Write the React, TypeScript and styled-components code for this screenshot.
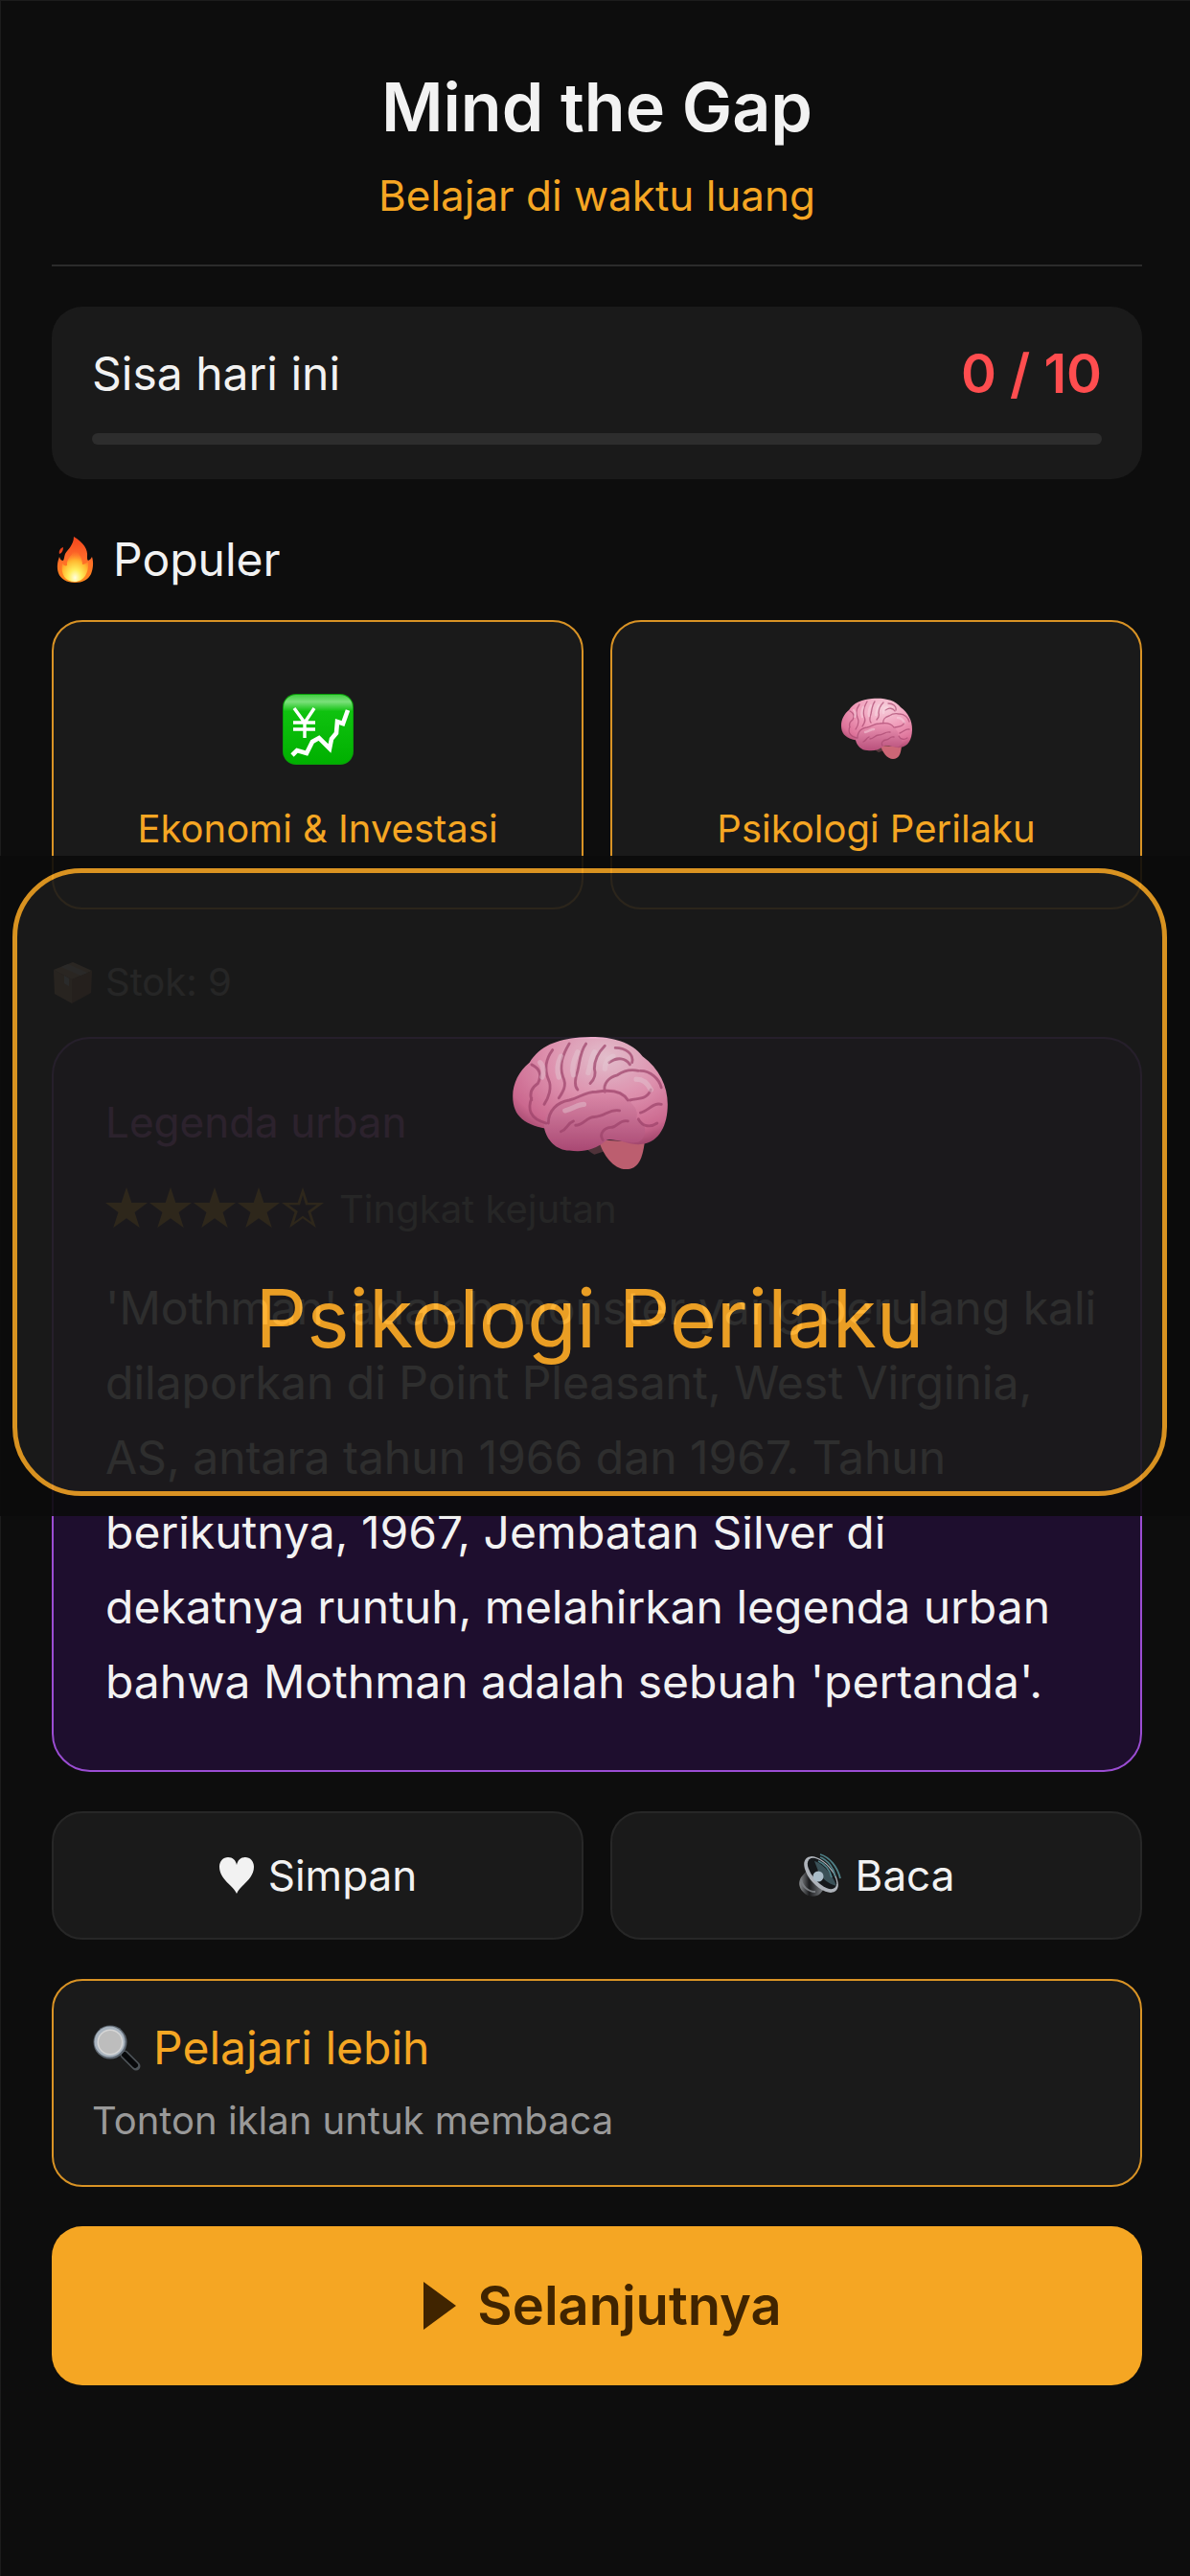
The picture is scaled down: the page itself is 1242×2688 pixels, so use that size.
import React from "react";
import styled, { createGlobalStyle } from "styled-components";

const color = {
  page: "#0d0d0d",
  panel: "#1a1a1a",
  line: "#2b2b2b",
  text: "#f2f2f2",
  muted: "#999999",
  accent: "#f5a623",
  accentLine: "#d99325",
  danger: "#ff4d4f",
  onAccent: "#402400",
};

const GlobalStyle = createGlobalStyle`
  *, *::before, *::after { box-sizing: border-box; }
  body {
    margin: 0;
    background: ${color.page};
    color: ${color.text};
    font-family: Inter, "Liberation Sans", "Noto Sans CJK JP", sans-serif;
  }
  h1, h2, p { margin: 0; font-weight: 400; }
  button { font: inherit; color: inherit; cursor: pointer; margin: 0; }
  svg { display: block; flex: none; }
`;

const Page = styled.div`
  position: relative;
  min-height: 100vh;
  padding: 70px 50px 120px 54px;
  background: ${color.page};
  box-shadow: inset 1px 1px 0 #1c1c1c;
`;

const Header = styled.header`
  display: flex;
  flex-direction: column;
  align-items: center;
  gap: 22px;
  padding-bottom: 44px;
  border-bottom: 2px solid ${color.line};
`;

const Title = styled.h1`
  && { font-weight: 600; }
  font-size: 70px;
  line-height: 84px;
`;

const Tagline = styled.p`
  font-size: 44px;
  line-height: 56px;
  color: ${color.accent};
`;

const QuotaCard = styled.section`
  display: flex;
  flex-direction: column;
  gap: 32px;
  margin-top: 42px;
  padding: 40px 42px 36px;
  border-radius: 32px;
  background: ${color.panel};
`;

const QuotaRow = styled.div`
  display: flex;
  justify-content: space-between;
  align-items: center;
  font-size: 48px;
  line-height: 60px;
`;

const QuotaCount = styled.strong`
  font-size: 56px;
  font-weight: 600;
  color: ${color.danger};
`;

const Track = styled.div`
  height: 12px;
  border-radius: 6px;
  background: #2d2d2d;
  overflow: hidden;
`;

const TrackFill = styled.div`
  height: 100%;
  background: ${color.accent};
`;

const SectionTitle = styled.h2`
  display: flex;
  align-items: center;
  gap: 16px;
  margin: 54px 0 33px;
  font-size: 48px;
  line-height: 60px;
`;

const Columns = styled.div`
  display: grid;
  grid-template-columns: 1fr 1fr;
  gap: 28px;
`;

const TopicCard = styled.button`
  display: flex;
  flex-direction: column;
  align-items: center;
  gap: 40px;
  padding: 72px 24px 58px;
  border: 2px solid ${color.accentLine};
  border-radius: 32px;
  background: ${color.panel};
  && {
    font-size: 40px;
    line-height: 48px;
    color: ${color.accent};
  }
`;

const Stock = styled.p`
  display: flex;
  align-items: center;
  gap: 12px;
  margin: 52px 0 33px;
  font-size: 40px;
  line-height: 48px;
  color: ${color.muted};
`;

const StoryCard = styled.article`
  padding: 59px 40px 53px 54px;
  border: 2px solid #9b4dd3;
  border-radius: 40px;
  background: #1e0e2e;
`;

const StoryTopic = styled.h2`
  font-size: 44px;
  line-height: 56px;
  color: #e070e8;
`;

const Rating = styled.div`
  display: flex;
  align-items: center;
  gap: 14px;
  margin: 39px 0 40px;
  font-size: 40px;
  line-height: 48px;
  color: ${color.muted};
`;

const StoryText = styled.p`
  font-size: 48px;
  line-height: 78px;
  white-space: pre-line;
`;

const Actions = styled(Columns)`
  margin-top: 41px;
`;

const ActionButton = styled.button`
  display: flex;
  align-items: center;
  justify-content: center;
  gap: 14px;
  padding: 37px 24px;
  border: 2px solid #272727;
  border-radius: 32px;
  background: ${color.panel};
  && { font-size: 44px; line-height: 56px; }
`;

const LearnCard = styled.button`
  display: flex;
  flex-direction: column;
  gap: 22px;
  width: 100%;
  padding: 40px 40px 43px;
  border: 2px solid ${color.accentLine};
  border-radius: 32px;
  background: ${color.panel};
  text-align: left;
  && {
    margin-top: 41px;
    font-size: 40px;
    line-height: 48px;
    color: ${color.muted};
  }
`;

const LearnTitle = styled.span`
  display: flex;
  align-items: center;
  gap: 12px;
  font-size: 48px;
  line-height: 60px;
  color: ${color.accent};
`;

const NextButton = styled.button`
  display: flex;
  align-items: center;
  justify-content: center;
  gap: 22px;
  width: 100%;
  padding: 53px 24px;
  border: 0;
  border-radius: 32px;
  background: ${color.accent};
  && {
    margin-top: 41px;
    font-size: 56px;
    font-weight: 600;
    line-height: 60px;
    color: ${color.onAccent};
  }
`;

const Preview = styled.div`
  position: absolute;
  top: 893px;
  left: 0;
  right: 0;
  padding: 13px 24px 21px 13px;
  background: #0b0b0b;
  opacity: 0.91;
`;

const PreviewCard = styled.div`
  display: flex;
  flex-direction: column;
  align-items: center;
  gap: 84px;
  padding: 154px 24px 128px;
  border: 5px solid #eda022;
  border-radius: 72px;
  background: #1b1b1b;
  color: #ffad24;
  font-size: 84px;
  line-height: 104px;
`;

const Fire = () => (
  <svg width="48" height="52" viewBox="0 0 48 52" aria-hidden="true">
    <defs>
      <linearGradient id="fireOuter" x1="0" y1="0" x2="0" y2="1">
        <stop offset="0" stopColor="#f0441c" />
        <stop offset="0.45" stopColor="#ff6a2a" />
        <stop offset="1" stopColor="#ff8a1c" />
      </linearGradient>
      <radialGradient id="fireInner" cx="0.5" cy="0.88" r="0.8">
        <stop offset="0" stopColor="#fffde0" />
        <stop offset="0.3" stopColor="#ffee5c" />
        <stop offset="0.65" stopColor="#ffb52e" />
        <stop offset="1" stopColor="#ff7a2a" stopOpacity="0" />
      </radialGradient>
    </defs>
    <path
      d="M23 2C33 8 38 15 37 23c0 2 0 3 1 4 2-1 3-2 4-4 2 6 1 13-1 18-3 6-9 9-17 9S9 46 7 40C5 34 6 28 8 23c1 3 2 4 4 4 1-2 1-4 2-7 2-4 9-9 9-18Z"
      fill="url(#fireOuter)"
    />
    <path d="M12 13c-3 1-5 4-4 7 3-1 4-4 4-7Z" fill="#e8421c" />
    <path
      d="M24 14c6 7 8 12 8 17 2 0 4-1 6-3 1 11-4 21-14 21S9 41 11 30c2 2 3 3 5 2-1-8 6-10 8-18Z"
      fill="url(#fireInner)"
    />
  </svg>
);

const Chart = () => (
  <svg width="76" height="80" viewBox="0 0 76 80" aria-hidden="true">
    <defs>
      <linearGradient id="chartFace" x1="0" y1="0" x2="0" y2="1">
        <stop offset="0" stopColor="#43cf43" />
        <stop offset="0.1" stopColor="#7be07b" />
        <stop offset="0.24" stopColor="#0fc20f" />
        <stop offset="1" stopColor="#00b000" />
      </linearGradient>
    </defs>
    <rect x="1" y="3" width="74" height="74" rx="14" fill="#0a9e0a" />
    <rect x="2" y="4" width="72" height="72" rx="13" fill="url(#chartFace)" />
    <g fill="none" stroke="#fff">
      <path d="M13 18 24 33 34 18M24 33v16M12 33h23M12 40h23" strokeWidth="3.4" />
      <path d="m11 67 5-5 10 3 6-12 7-4 11 11 2-10 5-6 1-12 6 2 5-14" strokeWidth="4.6" />
    </g>
  </svg>
);

const Brain = ({ size, id }: { size: number; id: string }) => (
  <svg width={size} height={(size * 80) / 76} viewBox="0 0 76 80" aria-hidden="true">
    <defs>
      <radialGradient id={id + "Top"} cx="0.6" cy="0.18" r="0.85">
        <stop offset="0" stopColor="#f6cfdb" />
        <stop offset="0.45" stopColor="#f09dba" />
        <stop offset="0.8" stopColor="#dd7299" />
        <stop offset="1" stopColor="#a34269" />
      </radialGradient>
      <linearGradient id={id + "Low"} x1="0" y1="0" x2="0" y2="1">
        <stop offset="0" stopColor="#f09ab8" />
        <stop offset="1" stopColor="#b84f7b" />
      </linearGradient>
    </defs>
    <path d="M36 56c-2 3 0 6 4 8l9-3Z" fill="#54363b" />
    <path d="M42 57c2 7 7 14 13 14s8-5 9-13Z" fill="#cc6676" />
    <path
      d="M19 52C7 50 1 46 1 36c0-6 3-12 8-16C14 12 22 9 33 8c12-1 24 1 30 9 8 6 12 14 12 23 0 10-4 18-12 19-6 1-11-3-18-2-9 6-23 6-26-5Z"
      fill={`url(#${id}Top)`}
    />
    <path
      d="M16 51c0-6 4-11 11-12 5-3 9-4 14-5 7-3 12-1 15 4 4 3 5 6 4 9 6 2 5 9 1 11-5 1-10-2-15-1-6 5-12 6-18 5-6 0-11-5-12-11Z"
      fill={`url(#${id}Low)`}
    />
    <g fill="none" stroke="#a8476f" strokeWidth="1.3" strokeLinecap="round" opacity="0.7">
      <path d="M18 49c0-6 4-10 10-11 5-1 7-4 13-4 6-1 12-1 15 4M17 49C9 47 8 42 10 37M10 21c4 2 5 5 3 9-3 2-4 5-3 8M20 14c-3 4-4 9-2 14 2 4 0 9-2 12M28 11c-3 5-5 10-3 16 2 4 0 7-2 10M36 11c-3 4-3 9-4 13-1 3-2 7 0 9M45 12c-3 3-5 6-5 11 1 3 0 5-2 7M45 34c-1-4 2-7 6-8 3-2 6-3 10-2M50 13c5 0 9 3 8 7M47 20c4-3 8-2 10 1M62 24c5 0 9 4 10 8M57 38c4-1 8 0 10-5M62 44c4-1 6-5 10-4M61 47c2 4 6 4 9 2M31 50c4 0 5-4 9-4 5 0 7-4 12-3M24 53c3-1 3-4 6-5M44 57c-2-3 1-6 4-6s4-4 8-3" />
    </g>
    <g fill="none" stroke="#f9dbe5" strokeWidth="2.4" strokeLinecap="round" opacity="0.45">
      <path d="M24 17c-2 4-2 7-1 10M32 15c-2 4-3 8-2 11M40 15c-2 4-2 7-3 10M49 17c-3 1-4 4-4 6M14 20c2 2 2 5 1 7M60 28c4 0 6 3 7 5M26 43c4-1 6-3 9-3" />
    </g>
  </svg>
);

const Box = () => (
  <svg width="44" height="48" viewBox="0 0 44 48" aria-hidden="true">
    <path d="m2 11 20-8 20 9-21 9Z" fill="#c99a72" />
    <path d="m2 11 19 10v25L3 36Z" fill="#b5835a" />
    <path d="m42 12-21 9v25l20-11Z" fill="#8b5a35" />
    <path d="m10 8 7-3 20 9-7 3Z" fill="#c9bfae" />
    <path d="m13 17 5 3v8l-5-3Z" fill="#c8d2d8" />
  </svg>
);

const STAR = "M22 0 27.3 16H44L30.5 26 35.7 42 22 32.3 8.3 42 13.5 26 0 16H16.7Z";
const STAR_HOLE = "M22 8 19 18.2H7.5L16.7 25 13 36.2 22 29.8 31 36.2 27.3 25 36.5 18.2H25Z";

const Stars = ({ value, total }: { value: number; total: number }) => (
  <svg
    width={total * 46}
    height="46"
    viewBox={`0 0 ${total * 46} 46`}
    role="img"
    aria-label={`${value} / ${total}`}
  >
    {Array.from({ length: total }, (_, i) => (
      <path
        key={i}
        d={i < value ? STAR : STAR + STAR_HOLE}
        fillRule="evenodd"
        fill={color.accent}
        transform={`translate(${i * 46} 0)`}
      />
    ))}
  </svg>
);

const Heart = () => (
  <svg width="38" height="40" viewBox="0 0 38 40" aria-hidden="true">
    <path
      d="M19 39C16 31 1 24 1 11 1 5 5 1 10 1c5 0 8 3 9 8 1-5 4-8 9-8 5 0 9 4 9 10 0 13-15 20-18 28Z"
      fill={color.text}
    />
  </svg>
);

const Speaker = () => (
  <svg width="46" height="46" viewBox="0 0 46 46" aria-hidden="true">
    <defs>
      <linearGradient id="spkBody" x1="0" y1="0" x2="1" y2="0">
        <stop offset="0" stopColor="#8a8d90" />
        <stop offset="0.4" stopColor="#1c1d1f" />
        <stop offset="1" stopColor="#808488" />
      </linearGradient>
    </defs>
    <path d="M3 25c-3 5-2 11 2 15 5 6 14 6 18 2l4-5L9 18Z" fill="url(#spkBody)" />
    <path d="M3 27c1 7 7 13 15 13" fill="none" stroke="#777b7f" strokeWidth="2" />
    <ellipse cx="24" cy="22" rx="12" ry="23" transform="rotate(-42 24 22)" fill="#aeb3ba" />
    <ellipse cx="25" cy="21" rx="9.5" ry="20" transform="rotate(-42 25 21)" fill="#15181b" />
    <path d="M17 8c8 2 19 14 23 26-8-2-14-7-18-13Z" fill="#3a5158" />
    <circle cx="21" cy="24" r="5.5" fill="#a9bcc8" />
    <g fill="none" stroke="#4f8087" strokeWidth="1.8">
      <path d="M21 8c7 3 12 9 14 17M23 4c8 3 14 11 16 20M23 1c10 3 18 13 21 25" />
    </g>
  </svg>
);

const Magnifier = () => (
  <svg width="52" height="50" viewBox="0 0 52 50" aria-hidden="true">
    <path d="m30 28 5 5" stroke="#8c9094" strokeWidth="5" />
    <path d="m34 32 12 12" stroke="#4d5358" strokeWidth="9" strokeLinecap="round" />
    <path d="m34 32 11 11" stroke="#08090b" strokeWidth="6" strokeLinecap="round" />
    <circle cx="19" cy="19" r="17.5" fill="#5d6670" />
    <circle cx="18.5" cy="18.5" r="16" fill="#a9b4bf" />
    <circle cx="19" cy="19" r="13.5" fill="#d6d6d6" />
    <circle cx="19" cy="19" r="12" fill="#bdbdbd" />
  </svg>
);

const Play = () => (
  <svg width="46" height="50" viewBox="0 0 46 50" aria-hidden="true">
    <path d="M12 0 46 25 12 50Z" fill={color.onAccent} />
  </svg>
);

const quota = { left: 0, total: 10 };

const story = [
  "'Mothman' adalah monster yang berulang kali",
  "dilaporkan di Point Pleasant, West Virginia,",
  "AS, antara tahun 1966 dan 1967. Tahun",
  "berikutnya, 1967, Jembatan Silver di",
  "dekatnya runtuh, melahirkan legenda urban",
  "bahwa Mothman adalah sebuah 'pertanda'.",
].join("\n");

export default function App() {
  return (
    <>
      <GlobalStyle />
      <Page>
        <Header>
          <Title>Mind the Gap</Title>
          <Tagline>Belajar di waktu luang</Tagline>
        </Header>

        <main>
          <QuotaCard>
            <QuotaRow>
              <span>Sisa hari ini</span>
              <QuotaCount>
                {quota.left} / {quota.total}
              </QuotaCount>
            </QuotaRow>
            <Track>
              <TrackFill style={{ width: `${(quota.left / quota.total) * 100}%` }} />
            </Track>
          </QuotaCard>

          <SectionTitle>
            <Fire />
            Populer
          </SectionTitle>
          <Columns>
            <TopicCard type="button">
              <Chart />
              Ekonomi &amp; Investasi
            </TopicCard>
            <TopicCard type="button">
              <Brain size={76} id="brainSmall" />
              Psikologi Perilaku
            </TopicCard>
          </Columns>

          <Stock>
            <Box />
            Stok: 9
          </Stock>

          <StoryCard>
            <StoryTopic>Legenda urban</StoryTopic>
            <Rating>
              <Stars value={4} total={5} />
              Tingkat kejutan
            </Rating>
            <StoryText>{story}</StoryText>
          </StoryCard>

          <Actions>
            <ActionButton type="button">
              <Heart />
              Simpan
            </ActionButton>
            <ActionButton type="button">
              <Speaker />
              Baca
            </ActionButton>
          </Actions>

          <LearnCard type="button">
            <LearnTitle>
              <Magnifier />
              Pelajari lebih
            </LearnTitle>
            <span>Tonton iklan untuk membaca</span>
          </LearnCard>

          <NextButton type="button">
            <Play />
            Selanjutnya
          </NextButton>
        </main>

        <Preview>
          <PreviewCard>
            <Brain size={166} id="brainLarge" />
            Psikologi Perilaku
          </PreviewCard>
        </Preview>
      </Page>
    </>
  );
}
